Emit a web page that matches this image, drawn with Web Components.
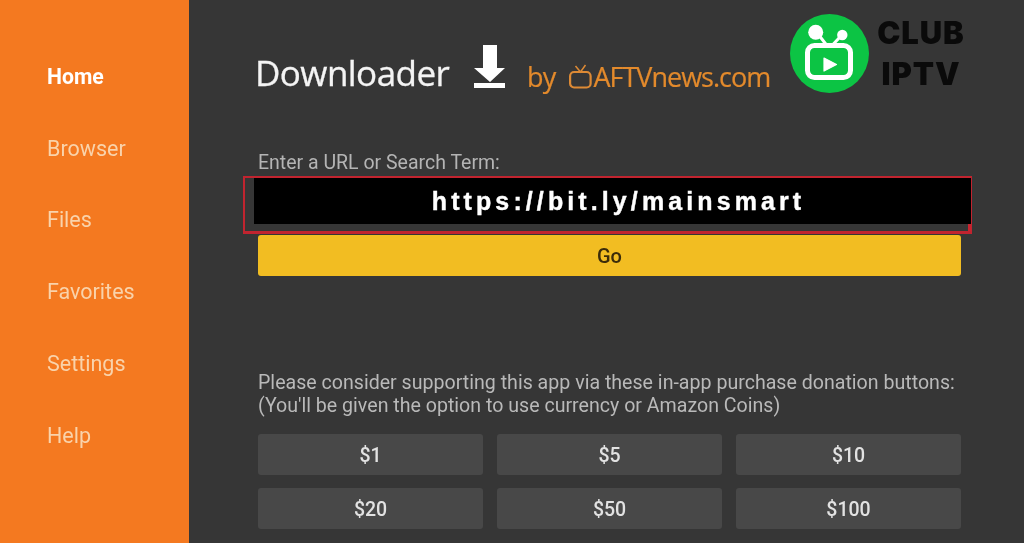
<!DOCTYPE html>
<html><head><meta charset="utf-8"><title>Downloader</title>
<style>
html,body{margin:0;padding:0;height:100%;background:#363636}
body{overflow:hidden}
</style></head>
<body>
<dl-app>
  <dl-nav slot="nav">
    <dl-nav-item active>Home</dl-nav-item>
    <dl-nav-item>Browser</dl-nav-item>
    <dl-nav-item>Files</dl-nav-item>
    <dl-nav-item>Favorites</dl-nav-item>
    <dl-nav-item>Settings</dl-nav-item>
    <dl-nav-item>Help</dl-nav-item>
  </dl-nav>
  <dl-header></dl-header>
  <dl-url-form label="Enter a URL or Search Term:" value="https://bit.ly/mainsmart"></dl-url-form>
  <dl-donate>
    <dl-amount>$1</dl-amount><dl-amount>$5</dl-amount><dl-amount>$10</dl-amount>
    <dl-amount>$20</dl-amount><dl-amount>$50</dl-amount><dl-amount>$100</dl-amount>
  </dl-donate>
  <club-badge slot="overlay"></club-badge>
</dl-app>
<script>
function def(name, html, init){
  customElements.define(name, class extends HTMLElement{
    constructor(){super();this.attachShadow({mode:'open'}).innerHTML=html;}
    connectedCallback(){init&&init(this);}
  });
}
def('dl-app',`<style>
:host{display:flex;width:1024px;height:543px;position:relative;overflow:hidden;background:#363636;font-family:Roboto,sans-serif}
main{flex:1;min-width:0;padding:0 63px 0 69px;display:flex;flex-direction:column}
.wrap{display:flex;flex:1;min-width:0;filter:blur(.4px)}
</style><div class="wrap"><slot name="nav"></slot><main><slot></slot></main></div><slot name="overlay"></slot>`);
def('dl-nav',`<style>
:host{display:flex;flex-direction:column;flex:none;width:189px;height:543px;box-sizing:border-box;background:#f47920;padding:40.5px 0 0 47px}
</style><slot></slot>`);
def('dl-nav-item',`<style>
:host{display:flex;align-items:center;height:71.8px;font:400 21.5px Roboto,sans-serif;color:#f9d3ab}
:host([active]){color:#fff;font-weight:700;font-size:21.2px}
</style><slot></slot>`);
def('dl-header',`<style>
:host{display:flex;align-items:flex-end;height:98px;box-sizing:border-box;padding:0 0 1px 0;margin:0 0 59px -3px}
.t{font:400 35px/46px "Open Sans",sans-serif;color:#f4f4f4;letter-spacing:-.55px;width:219px;flex:none;margin-bottom:1px;-webkit-text-stroke:.3px #f4f4f4}
svg{display:block}
.dl{width:31px;height:46px;margin:0 22px 6px 0;flex:none}
.by,.news{font:400 27px/40px "Open Sans",sans-serif;color:#e38a2c;margin-bottom:0;-webkit-text-stroke:.2px #e38a2c}
.by{margin-right:14px;letter-spacing:-.8px}
.news{letter-spacing:-1px}
.tv{width:23px;height:28px;margin:0 1px 7px 0;flex:none}
</style>
<span class="t">Downloader</span>
<svg class="dl" viewBox="0 0 31 46"><path d="M9 0h14v23h8L16 37 0 23h9z" fill="#fff"/><rect y="38" width="31" height="5" fill="#fff"/></svg>
<span class="by">by</span>
<svg class="tv" viewBox="0 0 23 28"><rect x="1.100" y="10" width="20.500" height="15.500" rx="4" fill="none" stroke="#dd8a35" stroke-width="2.200"/><path d="M6.500 4l5 6 5-7" fill="none" stroke="#dd8a35" stroke-width="1.500"/></svg>
<span class="news">AFTVnews.com</span>`);
def('dl-url-form',`<style>
:host{display:block}
label{display:block;font:400 19.500px/22px Roboto,sans-serif;color:#b4b4b4;margin-top:-5px;height:17px;margin-bottom:7px}
.frame{box-sizing:border-box;height:58px;margin:0 -11px 0 -15px;border:2px solid #c1242f;border-right-width:1px;border-bottom-width:3px;padding-left:9px;background:linear-gradient(#c8242f,#c8242f) right bottom/3px 7px no-repeat}
.field{height:46px;background:#000;color:#fff;font:700 25px/46px "Liberation Sans",sans-serif;letter-spacing:4.100px;text-align:center;padding-left:12px;-webkit-text-stroke:.4px #fff}
.go{box-sizing:border-box;height:41px;margin-top:1px;border-radius:3px;background:#f2bd22;color:#3b2c0a;font:500 20px/43px Roboto,sans-serif;text-align:center}
</style>
<label></label><div class="frame"><div class="field"></div></div><div class="go">Go</div>`,el=>{
  el.shadowRoot.querySelector('label').textContent=el.getAttribute('label');
  el.shadowRoot.querySelector('.field').textContent=el.getAttribute('value');
});
def('dl-donate',`<style>
:host{display:block;margin-top:95px}
p{margin:0 0 17px;font:400 19.600px/23px Roboto,sans-serif;color:#b9b9b9;white-space:nowrap}
.g{display:grid;grid-template-columns:repeat(3,225px);gap:13px 14px}
</style>
<p>Please consider supporting this app via these in-app purchase donation buttons:<br>(You'll be given the option to use currency or Amazon Coins)</p>
<div class="g"><slot></slot></div>`);
def('dl-amount',`<style>
:host{display:block;height:41px;border-radius:3px;background:#484848;color:#e2e2e2;font:500 19.500px/43px Roboto,sans-serif;text-align:center}
</style><slot></slot>`);
def('club-badge',`<style>
:host{position:absolute;left:790px;top:14px;width:180px;height:80px;display:flex;gap:7px}
svg{width:79px;height:79px;flex:none;filter:blur(.5px)}
.w{font:900 31px/40px Inter,sans-serif;color:#0a0a0a;text-align:center;width:90px;letter-spacing:.9px;filter:blur(.5px)}
.w div:first-child{margin-top:-1px}
.w div{height:41px}
</style>
<svg viewBox="0 0 79 79">
<circle cx="39.500" cy="39.500" r="39.500" fill="#0cc444"/>
<g fill="#fff"><circle cx="25.700" cy="18.300" r="7.500"/><circle cx="52.300" cy="21" r="5.200"/></g>
<path d="M28 20l8.500 11M50 23l-7.500 8" stroke="#fff" stroke-width="3" fill="none"/>
<rect x="17.500" y="31.500" width="43" height="32" rx="7" fill="none" stroke="#fff" stroke-width="5"/>
<path d="M34 44l12.500 6.500L34 57z" fill="#fff" stroke="#fff" stroke-width="1.200" stroke-linejoin="round"/>
</svg>
<div class="w"><div>CLUB</div><div>IPTV</div></div>`);
</script>
</body></html>
